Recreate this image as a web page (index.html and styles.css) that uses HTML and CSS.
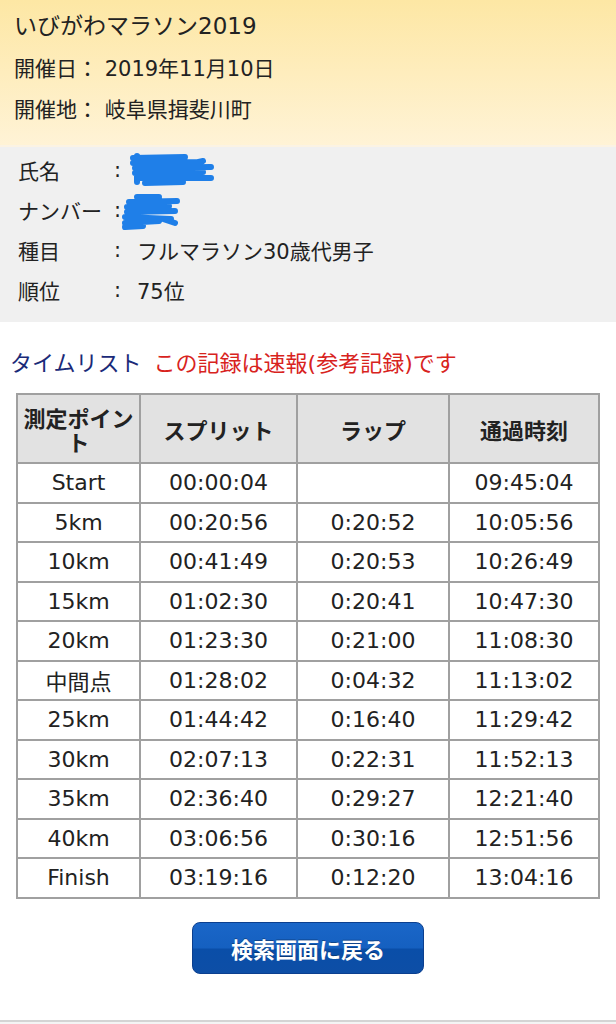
FILE: index.html
```html
<!DOCTYPE html>
<html lang="ja">
<head>
  <meta charset="UTF-8" />
  <title>タイムリスト</title>
  <link rel="stylesheet" href="styles.css">
</head>
<body>
  <div class="race">
    <h1>いびがわマラソン2019</h1>
    <p>開催日： 2019年11月10日</p>
    <p>開催地： 岐阜県揖斐川町</p>
  </div>

  <div class="runner">
    <div class="row">
      <span class="label">氏名</span><span class="colon">:</span>
      <svg class="mask mask-name" width="90" height="36" viewBox="0 0 90 36">
        <path d="M10 4 L10 30 M6 6 L58 5 M6 11 L72 10 M8 16 L84 15 M8 21 L76 20 M10 26 L84 26 M18 31 L56 30 M58 13 L76 9" fill="none" stroke="#1f7fe8" stroke-width="6" stroke-linecap="round"/>
      </svg>
    </div>
    <div class="row">
      <span class="label">ナンバー</span><span class="colon">:</span>
      <svg class="mask mask-num" width="64" height="38" viewBox="0 0 64 38">
        <path d="M18 4 L40 4 M10 9 L58 8 M8 14 L50 13 M8 19 L56 18 M6 24 L52 26 M6 30 L40 28 M6 34 L24 33 M44 26 L56 30" fill="none" stroke="#1f7fe8" stroke-width="6" stroke-linecap="round"/>
      </svg>
    </div>
    <div class="row">
      <span class="label">種目</span><span class="colon">:</span><span>フルマラソン30歳代男子</span>
    </div>
    <div class="row">
      <span class="label">順位</span><span class="colon">:</span><span>75位</span>
    </div>
  </div>

  <div class="times">
    <p class="caption"><span class="title">タイムリスト</span><span class="note">この記録は速報(参考記録)です</span></p>
    <table>
      <thead>
        <tr><th class="c1">測定ポイント</th><th class="c2">スプリット</th><th class="c3">ラップ</th><th class="c4">通過時刻</th></tr>
      </thead>
      <tbody>
        <tr><td>Start</td><td>00:00:04</td><td></td><td>09:45:04</td></tr>
        <tr><td>5km</td><td>00:20:56</td><td>0:20:52</td><td>10:05:56</td></tr>
        <tr><td>10km</td><td>00:41:49</td><td>0:20:53</td><td>10:26:49</td></tr>
        <tr><td>15km</td><td>01:02:30</td><td>0:20:41</td><td>10:47:30</td></tr>
        <tr><td>20km</td><td>01:23:30</td><td>0:21:00</td><td>11:08:30</td></tr>
        <tr><td>中間点</td><td>01:28:02</td><td>0:04:32</td><td>11:13:02</td></tr>
        <tr><td>25km</td><td>01:44:42</td><td>0:16:40</td><td>11:29:42</td></tr>
        <tr><td>30km</td><td>02:07:13</td><td>0:22:31</td><td>11:52:13</td></tr>
        <tr><td>35km</td><td>02:36:40</td><td>0:29:27</td><td>12:21:40</td></tr>
        <tr><td>40km</td><td>03:06:56</td><td>0:30:16</td><td>12:51:56</td></tr>
        <tr><td>Finish</td><td>03:19:16</td><td>0:12:20</td><td>13:04:16</td></tr>
      </tbody>
    </table>
    <div class="back">
      <button type="button">検索画面に戻る</button>
    </div>
  </div>
  <div class="footer"></div>
</body>
</html>
```

FILE: styles.css
```css
body {
  margin: 0;
  font-family: "DejaVu Sans", "Noto Sans CJK JP", sans-serif;
  color: #222;
  background: #fff;
}

.race {
  height: 147px;
  padding: 10px 14px 0;
  box-sizing: border-box;
  background: linear-gradient(to bottom, #fde7a4, #fff3d6);
  border-bottom: 2px solid #fbf3e4;
}

.race h1 {
  margin: 0 0 12px;
  font-size: 23px;
  font-weight: normal;
  line-height: 32px;
}

.race p {
  margin: 0 0 10px;
  font-size: 21px;
  line-height: 31px;
}

.runner {
  background: #f0f0f0;
  height: 175px;
  padding: 3px 0 0 18px;
  box-sizing: border-box;
}

.row {
  display: flex;
  align-items: center;
  height: 40px;
  font-size: 21px;
}

.label {
  width: 96px;
}

.colon {
  width: 23px;
}

.mask-name {
  margin-left: -10px;
}

.mask-num {
  margin-left: -18px;
  margin-top: 4px;
}

.times {
  padding: 27px 16px 0;
}

.caption {
  margin: 0 0 14px -6px;
  font-size: 22px;
  line-height: 30px;
}

.caption .title {
  color: #1a2a78;
  margin-right: 12px;
}

.caption .note {
  color: #d8231d;
}

table {
  width: 584px;
  border-collapse: collapse;
  text-align: center;
}

th, td {
  border: 2px solid #a0a0a0;
  padding: 0;
}

th {
  background: #e2e2e2;
  height: 67px;
  font-family: "Noto Sans CJK JP", sans-serif;
  font-size: 22px;
  line-height: 24px;
  padding: 0 2px;
}

th.c1 { width: 117px; }
th.c2 { width: 151px; }
th.c3 { width: 146px; }

td {
  height: 37.5px;
  font-size: 22px;
  color: #222;
}

.back {
  display: flex;
  justify-content: center;
  padding-top: 23px;
  height: 98px;
}

.back button {
  width: 232px;
  height: 52px;
  border: 1px solid #0b3f8f;
  border-radius: 8px;
  background: linear-gradient(to bottom, #1a66c8 0%, #1560c0 50%, #0a4ea8 52%, #0d4ea6 100%);
  color: #fff;
  font-family: "Noto Sans CJK JP", sans-serif;
  font-size: 22px;
  font-weight: bold;
  text-shadow: 0 -1px 0 rgba(0, 0, 0, 0.3);
}

.footer {
  border-top: 2px solid #d4d4d4;
  height: 4px;
  background: #f4f4f4;
}
```
